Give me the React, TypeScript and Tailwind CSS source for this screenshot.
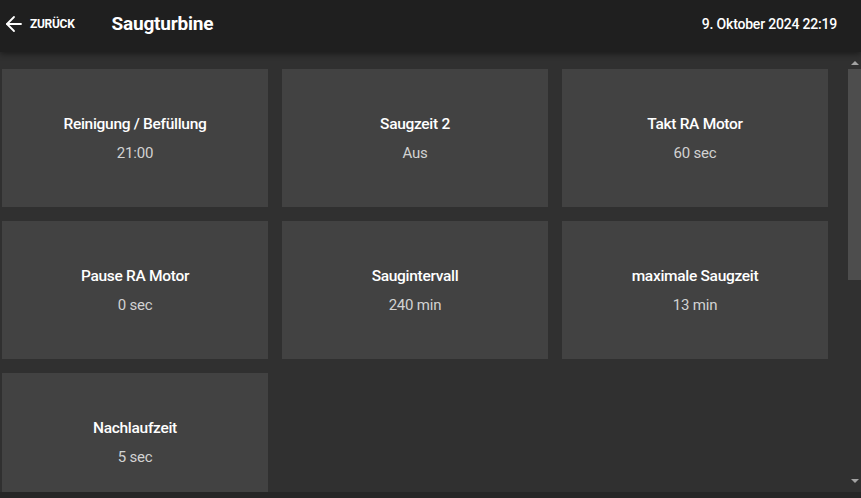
import { ArrowLeft } from 'lucide-react';

type Setting = {
  label: string;
  value: string;
};

const settings: Setting[] = [
  { label: 'Reinigung / Befüllung', value: '21:00' },
  { label: 'Saugzeit 2', value: 'Aus' },
  { label: 'Takt RA Motor', value: '60 sec' },
  { label: 'Pause RA Motor', value: '0 sec' },
  { label: 'Saugintervall', value: '240 min' },
  { label: 'maximale Saugzeit', value: '13 min' },
  { label: 'Nachlaufzeit', value: '5 sec' },
];

function SettingCard({ label, value }: Setting) {
  return (
    <button
      type="button"
      className="flex h-[138px] flex-col items-center justify-center gap-[9px] bg-[#424242] text-center"
    >
      <span className="text-[15.5px] leading-[20px] font-medium tracking-[-0.3px] text-white">{label}</span>
      <span className="text-[15px] leading-[20px] tracking-[-0.2px] text-[#d2d2d2]">{value}</span>
    </button>
  );
}

function Scrollbar() {
  return (
    <div className="flex w-[13px] flex-col items-center bg-[#303030]">
      <div className="flex h-[16px] items-end pb-[3px]">
        <div className="h-0 w-0 border-x-[4px] border-b-[4px] border-x-transparent border-b-[#a3a3a3]" />
      </div>
      <div className="mt-[1px] h-[211px] w-full bg-[#4d4d4d]" />
      <div className="flex-1" />
      <div className="flex h-[16px] items-start pt-[3px]">
        <div className="h-0 w-0 border-x-[4px] border-t-[4px] border-x-transparent border-t-[#a3a3a3]" />
      </div>
    </div>
  );
}

export default function App() {
  return (
    <div className="flex h-[498px] w-[861px] flex-col overflow-hidden bg-[#303030] font-['Roboto',sans-serif]">
      <header className="relative z-10 flex h-[52px] shrink-0 items-center bg-[#1f1f1f] pb-[4px] shadow-[0_2px_6px_rgba(0,0,0,0.45)]">
        <button type="button" className="flex items-center gap-[4px] pl-[2px] text-white">
          <ArrowLeft className="size-[24px]" strokeWidth={1.8} />
          <span className="text-[12px] font-bold tracking-tight">ZURÜCK</span>
        </button>
        <h1 className="ml-[37px] text-[19px] font-bold tracking-[-0.2px] text-white">Saugturbine</h1>
        <div className="ml-auto pr-[24px] text-[14px] font-medium tracking-[-0.2px] text-white">
          9. Oktober 2024 22:19
        </div>
      </header>

      <div className="flex h-[440px] shrink-0">
        <main className="flex-1 overflow-hidden pt-[17px] pl-[2px]">
          <div className="grid grid-cols-[266px_266px_266px] gap-[14px]">
            {settings.map((s) => (
              <SettingCard key={s.label} label={s.label} value={s.value} />
            ))}
          </div>
        </main>
        <Scrollbar />
      </div>

      <div className="flex-1 bg-[#262626]" />
    </div>
  );
}
